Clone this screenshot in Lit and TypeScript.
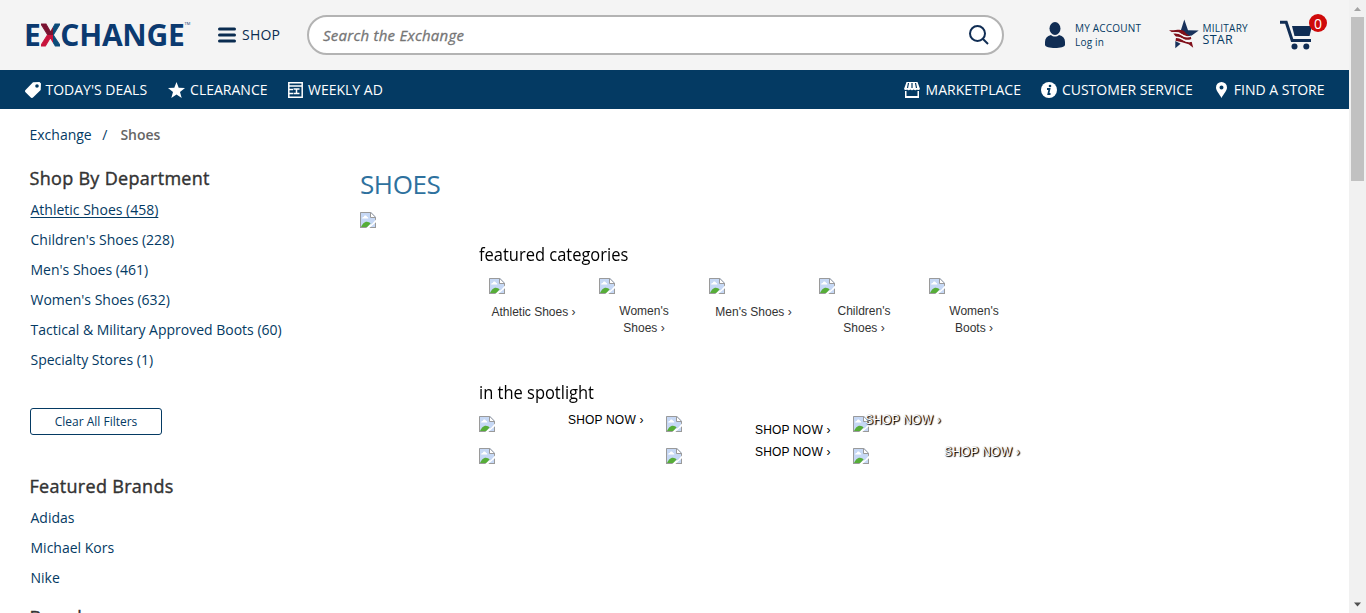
import { LitElement, html, css, svg } from "lit";
import { customElement } from "lit/decorators.js";

const brokenImage = html`<svg class="broken" width="16" height="16" viewBox="0 0 16 16">
  <path fill="#c6d8f5" d="M0 0h11l5 5v11H0z" />
  <path fill="#fff" d="M2 6.5c0-1.2 1-1.7 1.8-1.6C4.200 3 6.800 3 7 5c1 0 1.300.700 1.300 1.500z" />
  <path fill="#56ad38" d="M1 15c1-2.600 3-4.600 5-5.200 2-.3 3.500.6 4.600 1.700L7.500 15z" />
  <path fill="#fff" d="M11 1l4 4h-4z" />
  <path fill="none" stroke="#9a9a9a" d="M.5 16V.5h10.300l4.700 4.700V16M10.500.5v5h5M0 15.500h16" />
  <path fill="#fff" d="M16 7.500v2.700L9.300 16H6.200l3.600-3.200 2-.6z" />
</svg>`;

@customElement("app-root")
export class AppRoot extends LitElement {
  static styles = css`
    :host { display: flex; width: 1366px; height: 613px; overflow: hidden; background: #fff; font-family: "Open Sans", sans-serif; font-size: 14px; color: #043a63; }
    * { box-sizing: border-box; }
    svg { display: block; flex: none; }
    .page { width: 1349px; height: 613px; overflow: hidden; }
    .header { height: 70px; background: #f4f4f4; display: flex; align-items: center; white-space: nowrap; }
    .logo { display: flex; align-items: flex-start; flex: none; width: 218px; padding-left: 24px; height: 41px; margin-bottom: 2px; line-height: 41px; font-weight: 700; font-size: 30px; letter-spacing: -0.25px; color: #0b3a70; }
    .logo-x { color: transparent; -webkit-text-stroke: 1px transparent; background: conic-gradient(from 0deg at 64% 51%, #0b4a78 0 50%, #c8133c 50% 75%, #7a1230 75%); -webkit-background-clip: text; background-clip: text; }
    .tm { font-size: 4px; font-weight: 400; line-height: 20px; letter-spacing: 0; }
    .shop { display: flex; align-items: center; flex: none; width: 89px; gap: 6px; color: #0a2c50; letter-spacing: .2px; margin-bottom: 1px; }
    .search { width: 697px; flex: none; height: 40px; border: 2px solid #b3b3b3; border-radius: 20px; background: #fff; display: flex; align-items: center; justify-content: space-between; padding: 0 12px 0 14px; font-style: italic; font-size: 15px; letter-spacing: .25px; -webkit-text-stroke: .3px #757575; color: #757575; }
    .account { display: flex; align-items: center; margin-left: 40px; width: 125px; gap: 9px; }
    .account-text { font-size: 10px; line-height: 14px; letter-spacing: .2px; }
    .military { display: flex; align-items: center; width: 111px; gap: 4px; margin-bottom: 2px; }
    .mil-icon { margin-left: -.5px; }
    .mil-text { font-size: 10px; line-height: 11px; letter-spacing: .25px; }
    .star { font-size: 12.5px; line-height: 12px; letter-spacing: .3px; }
    .cart { position: relative; width: 50px; height: 42px; }
    .cart-icon { padding-top: 6px; }
    .badge { position: absolute; left: 29px; top: 0; width: 18px; height: 18px; border-radius: 9px; background: #cf0a0a; color: #fff; text-align: center; line-height: 19px; font-size: 14px; }
    .nav { height: 39px; background: #043a63; color: #fff; display: flex; align-items: center; justify-content: space-between; padding: 0 24.5px 0 24.5px; white-space: nowrap; }
    .group { display: flex; align-items: center; gap: 20.5px; }
    .item { display: flex; align-items: center; gap: 5px; }
    .wide { gap: 5.5px; }
    .market { gap: 5.5px; }
    .right { gap: 20px; }
    .body { display: flex; }
    .side { width: 360px; padding-left: 30px; }
    .crumbs { height: 51px; line-height: 51px; display: flex; gap: 10.5px; margin-left: -.5px; }
    .current { font-weight: 600; color: #666; padding-left: 2.5px; }
    .heading { font-size: 18px; line-height: 34px; margin: 0 0 0 -.5px; font-weight: 400; letter-spacing: .3px; -webkit-text-stroke: .4px #333; color: #333; }
    .list { padding: 0; margin: 0 0 33px; list-style: none; }
    .list li { height: 30px; line-height: 30px; padding-left: .5px; white-space: nowrap; }
    .underlined { text-decoration: underline; text-underline-offset: 2px; text-decoration-thickness: 1px; }
    .clear { display: block; font: 12px/25px "Open Sans", sans-serif; width: 132px; height: 27px; padding: 0; border: 1px solid #043a63; border-radius: 3px; background: #fff; color: #043a63; margin-bottom: 34px; }
    .last { margin-bottom: 7px; }
    .dept { padding-top: 1px; }
    .main { padding-top: 57px; width: 700px; }
    .title { color: #2e719e; font-size: 26px; line-height: 36px; height: 46px; margin: 0; font-weight: 400; letter-spacing: -.4px; }
    .promo { padding-left: 119px; padding-top: 14px; color: #000; }
    .sub { font-size: 18px; line-height: 24px; margin: 0; font-weight: 400; transform: scaleX(.915); transform-origin: left; }
    .cats { display: grid; grid-template-columns: repeat(5, 110px); height: 114px; padding-top: 12px; }
    .cat { padding: 0 10px; font: 12px/17px "Liberation Sans", Arial, sans-serif; color: #333; }
    .cat-label { padding-top: 9px; text-align: center; white-space: pre; }
    .single { padding-top: 10px; margin-left: -1px; }
    .spot { display: grid; grid-template-columns: repeat(3, 187px); grid-auto-rows: 32px; padding-top: 12px; }
    .tile { position: relative; }
    .now { position: absolute; white-space: nowrap; font: 12px/14px "Liberation Sans", Arial, sans-serif; letter-spacing: .18px; color: #000; }
    .shadow { color: #fff; text-shadow: 1px 1px 1px #000, 1px 0 1px #000; }
    .n0 { left: 89px; top: -3px; } .n1 { left: 89px; top: 7px; } .n2 { left: 12px; top: -3px; }
    .n4 { left: 89px; top: -3px; } .n5 { left: 91px; top: -3px; }
    .scroll { width: 17px; height: 613px; background: #f1f1f1; display: flex; flex-direction: column; align-items: center; }
    .thumb { width: 13px; height: 164px; background: #c1c1c1; }
    .grow { flex: 1; }
  `;

  private cats = ["Athletic Shoes ›", "Women's\nShoes ›", "Men's Shoes ›", "Children's\nShoes ›", "Women's\nBoots ›"];
  private depts = ["Athletic Shoes (458)", "Children's Shoes (228)", "Men's Shoes (461)", "Women's Shoes (632)", "Tactical & Military Approved Boots (60)", "Specialty Stores (1)"];
  private spots = ["n0", "n1", "n2 shadow", "", "n4", "n5 shadow"];

  private icon(body: unknown, w = 16) {
    return html`<svg width=${w} height="16" viewBox="0 0 ${w} 16" fill="#fff">${body}</svg>`;
  }

  render() {
    return html`
      <div class="page">
        <header class="header">
          <div class="logo"><span>E</span><span class="logo-x">X</span><span>CHANGE</span><span class="tm">TM</span></div>
          <div class="shop">
            <svg width="18" height="16" viewBox="0 0 18 16"><path d="M1.500 2h15M1.500 8h15M1.500 14h15" stroke="#0a2c50" stroke-width="3" stroke-linecap="round" /></svg>
            <span>SHOP</span>
          </div>
          <div class="search"><span>Search the Exchange</span>
            <svg width="22" height="22" viewBox="0 0 22 22" fill="none" stroke="#102d54" stroke-width="2"><circle cx="9.500" cy="9.500" r="7.500" /><path d="M15 15l5 5" /></svg>
          </div>
          <div class="account">
            <svg width="22" height="28" viewBox="0 0 22 28" fill="#102d54"><ellipse cx="11" cy="7.500" rx="5.500" ry="6.500" /><path d="M7 14c2 2 6 2 8 0 4 1 6 3.500 6 7v3c0 1.700-5 3-10 3S1 25.700 1 24v-3c0-3.500 2-6 6-7z" /></svg>
            <div class="account-text"><div>MY ACCOUNT</div><div>Log in</div></div>
          </div>
          <div class="military">
            <svg class="mil-icon" width="30" height="30" viewBox="0 0 30 30">
              <path fill="#17315b" d="M15.300.5l3.700 10.700 10.700.3-8 5.700c-2 .5-4 .2-5.200-1.200-.5-2-2-3.500-4.700-4.500zM6.300 22l5.300 2.700-5.300 4.600z" />
              <path fill="#800f1a" d="M0 11.300c7 .4 9.500-1.600 13.500 0 3 1.200 3 3.500 6.500 5.200v1l-5-1.200c-3-1-4.200-3-7-3H3zM4 14.300c5-.6 7 .3 9 1.900 2.500 1.900 6 1.800 8.700.8l.6 3c-4 1.600-7 .7-9.800-1-2.200-1.300-3.500-1.400-5.500-1.300zM7 18.800c4-.3 6 1.500 8.500 3 3 1.700 5.700 1.500 7.200 1l1.500 6-4.500-3.600C15 24 11 22.500 6.500 21.700z" />
              <path fill="none" stroke="#f4f4f4" stroke-width="1.300" d="M3 14c5-.8 8 .3 10 2s5 2.500 9.500 1M6 18.500c5-.7 6 1 9 2.700s6 1.500 8 .8" />
            </svg>
            <div class="mil-text"><div>MILITARY</div><div class="star">STAR</div></div>
          </div>
          <div class="cart"><div class="cart-icon">
            <svg width="33" height="30" viewBox="0 0 33 30" fill="#102d54"><path d="M12 6h20l-2.500 10h-15z" /><path d="M0 2.200h6.200l6 18.300H31" fill="none" stroke="#102d54" stroke-width="3" /><circle cx="14.500" cy="26.500" r="3" /><circle cx="26.300" cy="26.500" r="3" /></svg>
          </div><span class="badge">0</span></div>
        </header>
        <nav class="nav">
          <div class="group">
            <div class="item">${this.icon(svg`<path fill-rule="evenodd" d="M8 .3L14.500 0 16 1.500 15.700 8 8 15.500c-.8.7-1.500.7-2.200 0L.5 10.200c-.7-.7-.7-1.500 0-2.200zM12 2.200a1.800 1.800 0 100 3.600 1.800 1.800 0 000-3.600z"/>`)}<span>TODAY'S DEALS</span></div>
            <div class="item wide">${this.icon(svg`<path d="M8.500 0l2.200 5.800 6.300.2-5 4 1.700 6-5.200-3.400L3.300 16 5 10 0 6l6.300-.2z"/>`, 17)}<span>CLEARANCE</span></div>
            <div class="item">${this.icon(svg`<path fill="none" stroke="#fff" stroke-width="1.500" d="M.8.8h13.400v14.400H.8zM1 4h13M1 7.500h4M1 11.500h4M5.500 7h6M5.500 11.500h6M8.500 7v4.500"/>`, 15)}<span>WEEKLY AD</span></div>
          </div>
          <div class="group right">
            <div class="item market">${this.icon(svg`<path d="M2.500 0h11L16 7c-.5 1.300-2.200 1.300-3 .4-1 1-2.400 1-3.300 0-1 1-2.400 1-3.400 0-1 1-2.300 1-3.300 0-.8.900-2.500.900-3-.4zM1 9h1.500v5h11V9H15v7H1z"/><path d="M4.500 1L3.500 6M8 1v5M11.500 1l1 5" stroke="#043a63" stroke-width="1.200"/>`)}<span>MARKETPLACE</span></div>
            <div class="item">${this.icon(svg`<circle cx="8" cy="8" r="8"/><circle cx="9" cy="4" r="1.300" fill="#043a63"/><path d="M6 7h2.500L7.300 12h2.200" fill="none" stroke="#043a63" stroke-width="1.800"/>`)}<span>CUSTOMER SERVICE</span></div>
            <div class="item">${this.icon(svg`<path fill-rule="evenodd" d="M8.500 0A5.500 5.500 0 003 5.500C3 9 6.500 12 8.500 16c2-4 5.500-7 5.500-10.500A5.500 5.500 0 008.500 0zm0 3.500a2 2 0 110 4 2 2 0 010-4z"/>`)}<span>FIND A STORE</span></div>
          </div>
        </nav>
        <div class="body">
          <aside class="side">
            <div class="crumbs"><span>Exchange</span><span>/</span><span class="current">Shoes</span></div>
            <div class="dept"><h2 class="heading">Shop By Department</h2></div>
            <ul class="list">${this.depts.map((d, i) => html`<li><span class=${i ? "" : "underlined"}>${d}</span></li>`)}</ul>
            <button class="clear">Clear All Filters</button>
            <h2 class="heading">Featured Brands</h2>
            <ul class="list last"><li>Adidas</li><li>Michael Kors</li><li>Nike</li></ul>
            <h2 class="heading">Brand</h2>
          </aside>
          <main class="main">
            <h1 class="title">SHOES</h1>
            ${brokenImage}
            <div class="promo">
              <h3 class="sub">featured categories</h3>
              <div class="cats">${this.cats.map((c) => html`<div class="cat">${brokenImage}<div class="cat-label ${/^(A|M)/.test(c) ? "single" : ""}">${c}</div></div>`)}</div>
              <h3 class="sub">in the spotlight</h3>
              <div class="spot">${this.spots.map((s) => html`<div class="tile">${brokenImage}${s ? html`<span class="now ${s}">SHOP NOW ›</span>` : ""}</div>`)}</div>
            </div>
          </main>
        </div>
      </div>
      <div class="scroll">
        <svg width="17" height="17" viewBox="0 0 17 17"><path d="M5 11l3.500-4 3.500 4z" fill="#a3a3a3" /></svg>
        <div class="thumb"></div><div class="grow"></div>
        <svg width="17" height="17" viewBox="0 0 17 17"><path d="M5 6.500l3.500 4 3.500-4z" fill="#505050" /></svg>
      </div>`;
  }
}
